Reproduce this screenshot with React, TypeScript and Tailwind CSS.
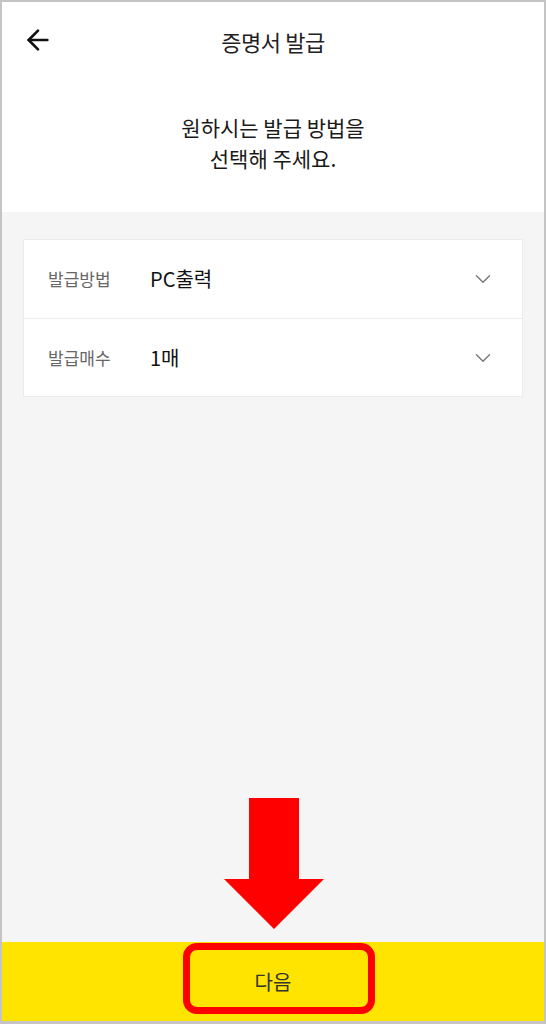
import { ArrowLeft, ChevronDown } from "lucide-react";

const rows = [
  ["발급방법", "PC출력"],
  ["발급매수", "1매"],
];

export default function App() {
  return (
    <div className="relative flex h-[1024px] w-[546px] flex-col overflow-hidden border-2 border-b-[3px] border-[#c4c4c4] bg-[#f5f5f5] font-['Noto_Sans_CJK_KR','Noto_Sans',sans-serif] text-[#111]">
      <section className="bg-white">
        <header className="relative flex h-[78px] items-center justify-center">
          <ArrowLeft className="absolute left-[20px] top-[22px] h-[32px] w-[32px] text-[#111]" strokeWidth={2} />
          <h1 className="text-[22px] font-normal tracking-[-0.02em] text-[#222]">증명서 발급</h1>
        </header>
        <p className="pb-[38px] pt-[32px] text-center text-[21px] leading-[31px] text-[#1a1a1a]">
          원하시는 발급 방법을
          <br />
          선택해 주세요.
        </p>
      </section>

      <div className="px-[21px] pt-[27px]">
        <div className="border border-[#ececec] bg-white">
          {rows.map(([label, value], i) => (
            <div
              key={label}
              className={`flex h-[78px] items-center pl-[24px] pr-[26px] ${i > 0 ? "border-t border-[#ececec]" : ""}`}
            >
              <span className="w-[102px] text-[17px] text-[#666]">{label}</span>
              <span className="flex-1 text-[20px] text-[#111]">{value}</span>
              <ChevronDown className="h-[26px] w-[26px] text-[#777]" strokeWidth={1.3} />
            </div>
          ))}
        </div>
      </div>

      <div className="flex-1" />

      <footer className="flex h-[79px] items-center justify-center bg-[#ffe400]">
        <span className="text-[20px] text-[#333]">다음</span>
      </footer>

      {/* annotation overlay */}
      <svg className="absolute left-[222px] top-[796px]" width="100" height="132" viewBox="0 0 100 132">
        <polygon points="25,0 75,0 75,81 100,81 50,131 0,81 25,81" fill="#ff0000" />
      </svg>
      <div className="absolute left-[181px] top-[941px] h-[71px] w-[192px] rounded-[14px] border-[7px] border-[#ff0000]" />
    </div>
  );
}
